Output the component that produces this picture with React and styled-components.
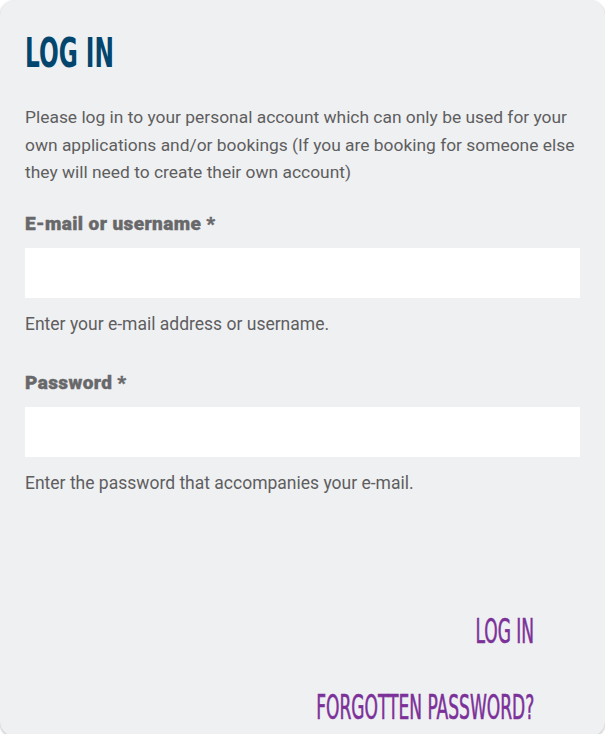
import React from 'react';
import styled, { createGlobalStyle } from 'styled-components';

const GlobalStyle = createGlobalStyle`
  html, body {
    margin: 0;
    padding: 0;
    background: #ffffff;
    overflow: hidden;
  }
  * { box-sizing: border-box; }
`;

const Card = styled.div`
  width: 605px;
  min-height: 737px;
  background: #eff0f2;
  border-radius: 16px;
  box-shadow: 0 1px 3px rgba(0, 0, 0, 0.3);
  padding: 30px 25px 0 25px;
  font-family: Roboto, "Liberation Sans", sans-serif;
`;

const Title = styled.h1`
  margin: 0;
  display: inline-block;
  font-family: "DejaVu Sans Condensed", "DejaVu Sans", sans-serif;
  font-weight: bold;
  font-size: 41px;
  line-height: 46px;
  color: #02466e;
  transform: scaleX(0.63);
  transform-origin: left center;
`;

const Intro = styled.p`
  margin: 28px 0 0 0;
  font-size: 17.4px;
  line-height: 27.5px;
  color: #5e5e60;
`;

const Field = styled.div`
  margin-top: ${p => p.$first ? '26px' : '36px'};
  display: flex;
  flex-direction: column;
`;

const Label = styled.label`
  font-size: 19px;
  font-weight: 900;
  color: #68686a;
  letter-spacing: 0.4px;
  line-height: 22px;
  -webkit-text-stroke: 0.4px #68686a;
`;

const Input = styled.input`
  margin-top: 13px;
  height: 50px;
  width: 555px;
  border: none;
  background: #ffffff;
  outline: none;
  padding: 0 12px;
  font-size: 16px;
`;

const Help = styled.div`
  margin-top: 14px;
  font-size: 17.5px;
  line-height: 24px;
  color: #5e5e60;
`;

const Actions = styled.div`
  margin-top: 122px;
  padding-right: 46px;
  display: flex;
  flex-direction: column;
  align-items: flex-end;
  gap: 46px;
`;

const PurpleLink = styled.a`
  display: inline-block;
  font-family: "DejaVu Sans Condensed", "DejaVu Sans", sans-serif;
  font-size: 33px;
  line-height: 30px;
  color: #7b3199;
  -webkit-text-stroke: 0.6px #7b3199;
  text-decoration: none;
  white-space: nowrap;
  transform: scaleX(0.575);
  transform-origin: right center;
  cursor: pointer;
`;

export default function App() {
  return (
    <>
      <GlobalStyle />
      <Card>
        <Title>LOG IN</Title>
        <Intro>
          Please log in to your personal account which can only be used for your
          own applications and/or bookings (If you are booking for someone else
          they will need to create their own account)
        </Intro>
        <Field $first>
          <Label>E-mail or username *</Label>
          <Input type="text" />
          <Help>Enter your e-mail address or username.</Help>
        </Field>
        <Field>
          <Label>Password *</Label>
          <Input type="password" />
          <Help>Enter the password that accompanies your e-mail.</Help>
        </Field>
        <Actions>
          <PurpleLink>LOG IN</PurpleLink>
          <PurpleLink>FORGOTTEN PASSWORD?</PurpleLink>
        </Actions>
      </Card>
    </>
  );
}
